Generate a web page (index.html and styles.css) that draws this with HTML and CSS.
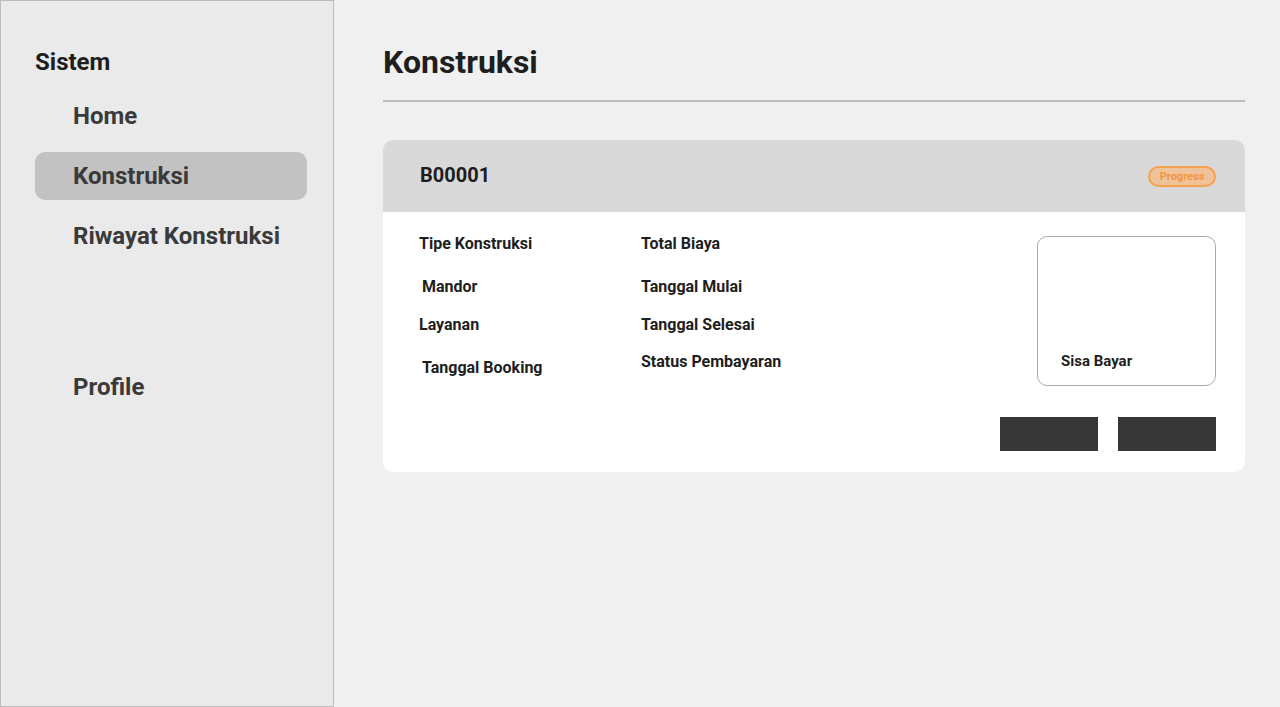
FILE: index.html
```html
<!DOCTYPE html>
<html lang="id">
<head>
<meta charset="utf-8">
<title>Konstruksi</title>
<link rel="stylesheet" href="styles.css">
</head>
<body>
<aside class="sidebar">
  <div class="brand">Sistem</div>
  <nav class="nav">
    <a class="nav-item">Home</a>
    <a class="nav-item active">Konstruksi</a>
    <a class="nav-item">Riwayat Konstruksi</a>
    <a class="nav-item profile">Profile</a>
  </nav>
</aside>
<main class="main">
  <header class="page-head">
    <h1>Konstruksi</h1>
  </header>
  <section class="card">
    <div class="card-head">
      <span class="code">B00001</span>
      <span class="badge">Progress</span>
    </div>
    <div class="card-body">
      <div class="info">
        <div class="col col-a">
          <div class="lbl">Tipe Konstruksi</div>
          <div class="lbl g25 in3">Mandor</div>
          <div class="lbl g20">Layanan</div>
          <div class="lbl g25 in3">Tanggal Booking</div>
        </div>
        <div class="col col-b">
          <div class="lbl">Total Biaya</div>
          <div class="lbl g25">Tanggal Mulai</div>
          <div class="lbl g20">Tanggal Selesai</div>
          <div class="lbl g19">Status Pembayaran</div>
        </div>
        <div class="sisa">
          <div class="lbl small">Sisa Bayar</div>
        </div>
      </div>
      <div class="actions">
        <button class="btn"></button>
        <button class="btn"></button>
      </div>
    </div>
  </section>
</main>
</body>
</html>
```

FILE: styles.css
```css
* { box-sizing: border-box; }
html, body { margin: 0; padding: 0; }
body {
  display: flex;
  width: 1280px;
  height: 707px;
  overflow: hidden;
  background: #f0f0f0;
  font-family: Roboto, "Liberation Sans", sans-serif;
  color: #1e1e1e;
}
.sidebar {
  width: 334px;
  flex: none;
  height: 707px;
  background: #eaeaea;
  border: 1px solid #bdbdbd;
  padding: 47px 26px 0 34px;
}
.brand {
  font-size: 24px;
  font-weight: 700;
  line-height: 28px;
  color: #1e1e1e;
}
.nav {
  display: flex;
  flex-direction: column;
  gap: 12px;
  margin-top: 16px;
}
.nav-item {
  display: flex;
  align-items: center;
  height: 48px;
  padding-left: 38px;
  border-radius: 10px;
  font-size: 24px;
  font-weight: 700;
  color: #3a3a3a;
}
.nav-item.active { background: #c2c2c2; }
.nav-item.profile { margin-top: 91px; }
.main {
  flex: 1;
  padding: 0 35px 0 49px;
}
.page-head {
  padding-top: 43px;
  padding-bottom: 19px;
  border-bottom: 2px solid #bdbdbd;
}
.page-head h1 {
  margin: 0;
  font-size: 32px;
  line-height: 38px;
  font-weight: 700;
  color: #1e1e1e;
}
.card {
  margin-top: 38px;
  background: #fff;
  border-radius: 10px;
  overflow: hidden;
}
.card-head {
  height: 72px;
  background: #d9d9d9;
  display: flex;
  align-items: center;
  justify-content: space-between;
  padding: 0 29px 0 37px;
}
.code {
  font-size: 20px;
  font-weight: 700;
  color: #1e1e1e;
  margin-top: -2px;
}
.badge {
  display: flex;
  align-items: center;
  justify-content: center;
  width: 68px;
  height: 21px;
  margin-top: 1px;
  border: 2px solid #f7a252;
  border-radius: 11px;
  background: #efc29a;
  color: #f3963f;
  font-size: 11px;
  font-weight: 700;
}
.card-body {
  padding: 23px 29px 21px 36px;
}
.info {
  display: flex;
}
.col {
  display: flex;
  flex-direction: column;
}
.col-a { width: 222px; }
.col-b { flex: 1; }
.lbl {
  font-size: 16px;
  line-height: 18px;
  font-weight: 700;
  color: #1e1e1e;
}
.lbl.small { font-size: 15px; }
.g25 { margin-top: 25px; }
.g20 { margin-top: 20px; }
.g19 { margin-top: 19px; }
.in3 { padding-left: 3px; }
.sisa {
  width: 179px;
  height: 150px;
  margin-top: 1px;
  border: 1px solid #aaaaaa;
  border-radius: 10px;
  display: flex;
  flex-direction: column;
  justify-content: flex-end;
  padding: 0 0 15px 23px;
}
.actions {
  display: flex;
  justify-content: flex-end;
  gap: 20px;
  margin-top: 31px;
}
.btn {
  width: 98px;
  height: 34px;
  border: 0;
  padding: 0;
  background: #363636;
}
```
